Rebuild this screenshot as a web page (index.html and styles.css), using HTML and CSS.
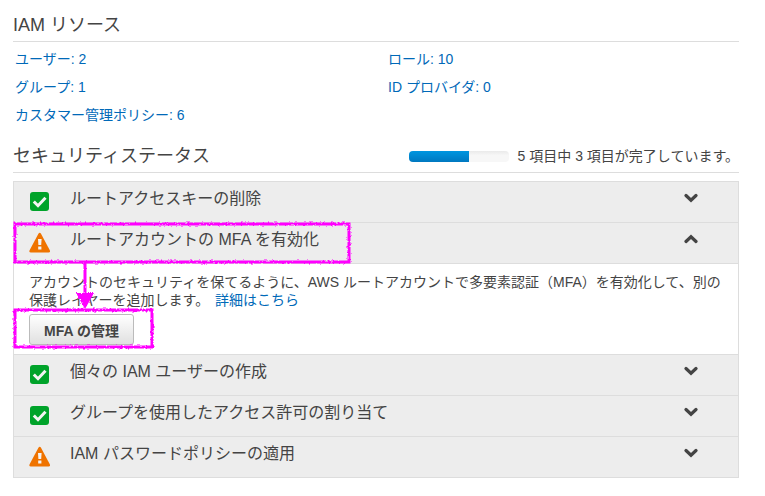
FILE: index.html
```html
<!DOCTYPE html>
<html lang="ja">
<head>
  <meta charset="UTF-8">
  <meta name="viewport" content="width=device-width, initial-scale=1.0">
  <title>IAM ダッシュボード</title>
  <link rel="stylesheet" href="styles.css">
</head>
<body>

  <!-- Shared icons -->
  <svg class="sprite" aria-hidden="true">
    <symbol id="icon-check" viewBox="0 0 22 22">
      <rect x="1" y="1" width="19" height="19" rx="3" fill="#00a32a"/>
      <path d="M4.800 10.500l4.200 4.200 7.500-8" fill="none" stroke="#f4f4f4" stroke-width="3"/>
    </symbol>
    <symbol id="icon-warning" viewBox="0 0 22 22">
      <path d="M9.4 1.8Q10.700 -.4 12 1.800L20.800 18.200Q21.500 20.500 19.500 20.500H1.900Q-.1 20.500.6 18.200Z" fill="#ef7300"/>
      <path d="M9 7h3.600l-.4 6H9.400zM9.200 14.500h3.200v3h-3.200z" fill="#f4f4f4"/>
    </symbol>
    <symbol id="icon-chevron" viewBox="0 0 14 10">
      <path d="M2 2.500l5 4.700 5-4.700" fill="none" stroke="#444" stroke-width="3.200" stroke-linecap="round"/>
    </symbol>
  </svg>

  <main class="dashboard">
    <section>
      <h2 class="section-header">IAM リソース</h2>
      <ul class="resources">
        <li><a href="#users">ユーザー: 2</a></li>
        <li><a href="#roles">ロール: 10</a></li>
        <li><a href="#groups">グループ: 1</a></li>
        <li><a href="#providers">ID プロバイダ: 0</a></li>
        <li><a href="#policies">カスタマー管理ポリシー: 6</a></li>
      </ul>
    </section>

    <section>
      <div class="section-header status-header">
        <h2>セキュリティステータス</h2>
        <div class="status-progress">
          <progress id="securityProgress" value="3" max="5"></progress>
          <label for="securityProgress">5 項目中 3 項目が完了しています。</label>
        </div>
      </div>

      <div class="checklist">
        <button type="button" class="item" aria-expanded="false">
          <svg class="status-icon"><use href="#icon-check"/></svg>
          <span class="item-title">ルートアクセスキーの削除</span>
          <svg class="chevron"><use href="#icon-chevron"/></svg>
        </button>

        <button type="button" class="item" aria-expanded="true">
          <svg class="status-icon"><use href="#icon-warning"/></svg>
          <span class="item-title">ルートアカウントの MFA を有効化</span>
          <svg class="chevron"><use href="#icon-chevron"/></svg>
        </button>
        <div class="item-body">
          <p>アカウントのセキュリティを保てるように、AWS ルートアカウントで多要素認証（MFA）を有効化して、別の保護レイヤーを追加します。 <a href="#details">詳細はこちら</a></p>
          <button type="button" class="manage-button">MFA の管理</button>
        </div>

        <button type="button" class="item" aria-expanded="false">
          <svg class="status-icon"><use href="#icon-check"/></svg>
          <span class="item-title">個々の IAM ユーザーの作成</span>
          <svg class="chevron"><use href="#icon-chevron"/></svg>
        </button>

        <button type="button" class="item" aria-expanded="false">
          <svg class="status-icon"><use href="#icon-check"/></svg>
          <span class="item-title">グループを使用したアクセス許可の割り当て</span>
          <svg class="chevron"><use href="#icon-chevron"/></svg>
        </button>

        <button type="button" class="item" aria-expanded="false">
          <svg class="status-icon"><use href="#icon-warning"/></svg>
          <span class="item-title">IAM パスワードポリシーの適用</span>
          <svg class="chevron"><use href="#icon-chevron"/></svg>
        </button>

        <!-- Hand drawn marks over the list -->
        <svg class="marks" width="340" height="170" aria-hidden="true">
          <defs>
            <filter id="rough" filterUnits="userSpaceOnUse" x="-4" y="0" width="348" height="170">
              <feTurbulence type="fractalNoise" baseFrequency="0.4" numOctaves="2" seed="4"/>
              <feDisplacementMap in="SourceGraphic" scale="3" xChannelSelector="R" yChannelSelector="G"/>
            </filter>
          </defs>
          <g filter="url(#rough)" fill="none" stroke="#ff00ff" stroke-width="3">
            <rect x="2" y="43" width="334" height="38"/>
            <rect x="2" y="129" width="137" height="37"/>
            <path d="M72 82v32"/>
            <path d="M63 112h18L72 128z" fill="#ff00ff" stroke="none"/>
          </g>
        </svg>
      </div>
    </section>
  </main>

</body>
</html>
```

FILE: styles.css
```css
body {
  margin: 0;
  background: #fff;
  color: #444;
  font-family: "Liberation Sans", "Noto Sans CJK JP", sans-serif;
  font-size: 14px;
  line-height: 18px;
}

a {
  color: #0069b8;
  text-decoration: none;
}

a:hover {
  text-decoration: underline;
}

.sprite {
  display: none;
}

.dashboard {
  padding: 8px 26px 8px 13px;
}

/* Section headings */
.section-header {
  margin: 0;
  padding-top: 1px;
  border-bottom: 1px solid #ddd;
  font-size: 18px;
  font-weight: normal;
  line-height: 32px;
}

.status-header {
  display: flex;
  justify-content: space-between;
  align-items: center;
}

.status-header h2 {
  margin: 0;
  font-size: 18px;
  font-weight: normal;
}

.status-progress {
  display: flex;
  align-items: center;
  gap: 9px;
  font-size: 14px;
}

progress {
  appearance: none;
  width: 100px;
  height: 11px;
  border: none;
}

progress::-webkit-progress-bar {
  background: linear-gradient(#eaeaea, #f7f7f7 40%);
  border-radius: 4px;
  overflow: hidden;
}

progress::-webkit-progress-value {
  background: linear-gradient(#0096e0, #0078c0);
}

/* Resource links */
.resources {
  display: grid;
  grid-template-columns: 1fr 1fr;
  gap: 10px 24px;
  margin: 0;
  padding: 8px 2px 15px;
  list-style: none;
}

/* Security checklist */
.checklist {
  position: relative;
  margin-top: 8px;
  border: 1px solid #ddd;
  border-top: none;
}

.item {
  display: flex;
  align-items: flex-start;
  width: 100%;
  height: 41px;
  padding: 7px 40px 0 15px;
  border: none;
  border-top: 1px solid #ddd;
  background: #ededed;
  color: #444;
  font-family: inherit;
  font-size: 16px;
  line-height: 20px;
  text-align: left;
  cursor: pointer;
}

.status-icon {
  width: 22px;
  height: 22px;
  margin: 2px 19px 0 0;
}

.item-title {
  flex: 1;
}

.chevron {
  width: 14px;
  height: 10px;
  margin-top: 4px;
}

.item[aria-expanded="true"] .chevron {
  transform: rotate(180deg);
}

.item-body {
  padding: 9px 15px;
  border-top: 1px solid #ddd;
}

.item-body p {
  margin: 0 0 5px;
}

.item-body a {
  margin-left: 2px;
}

.manage-button {
  display: block;
  height: 31px;
  padding: 0 14px;
  border: 1px solid #bbb;
  border-radius: 3px;
  background: linear-gradient(#fff, #e0e0e0);
  color: #444;
  font-family: inherit;
  font-size: 14px;
  font-weight: bold;
}

.marks {
  position: absolute;
  top: 0;
  left: -1px;
  overflow: visible;
  pointer-events: none;
}
```
